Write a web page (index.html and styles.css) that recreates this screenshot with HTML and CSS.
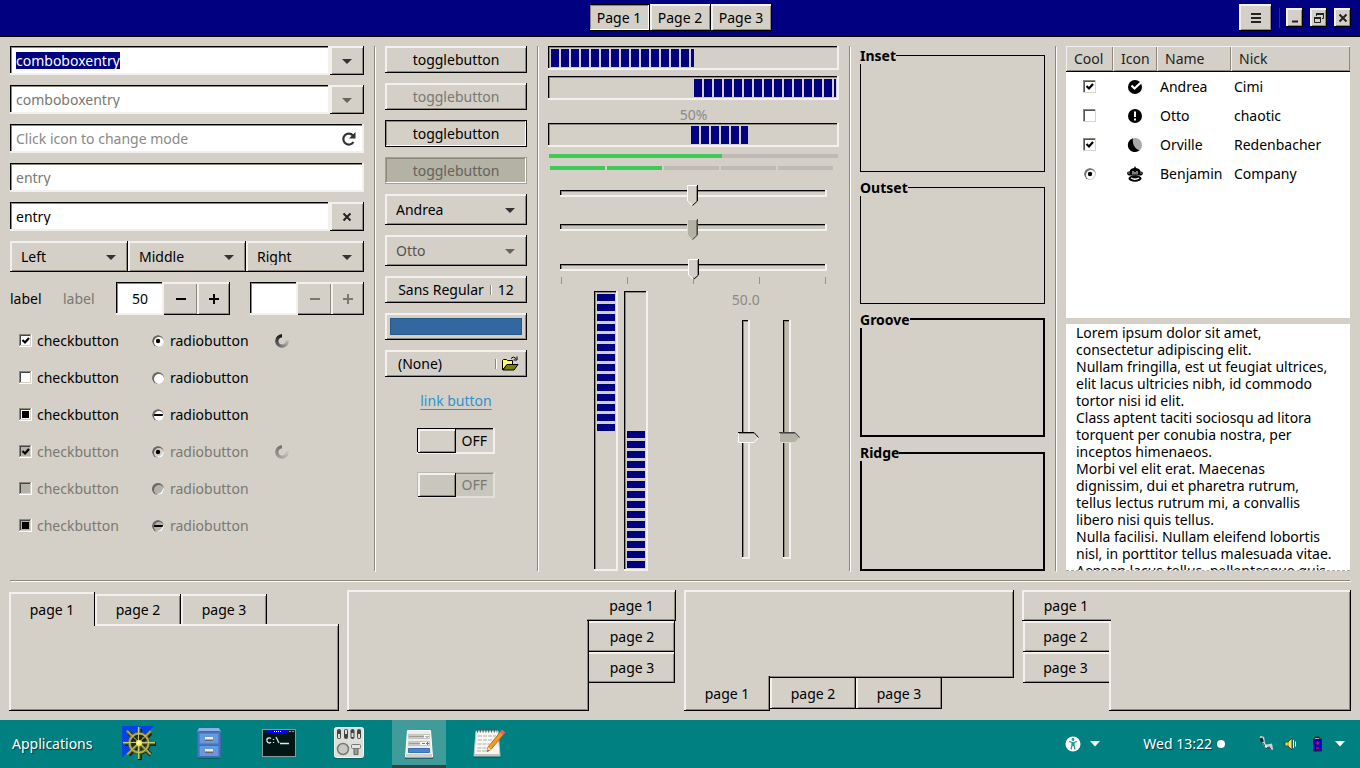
FILE: index.html
```html
<!DOCTYPE html>
<html lang="en">
<head>
<meta charset="utf-8">
<title>Widget Factory</title>
<link rel="stylesheet" href="styles.css">
</head>
<body>
<header class="headerbar">
  <div class="stack-switcher">
    <button class="btn pressed" type="button">Page 1</button>
    <button class="btn" type="button">Page 2</button>
    <button class="btn" type="button">Page 3</button>
  </div>
  <div class="window-controls">
    <button class="btn menu-btn" type="button" aria-label="Menu"><svg width="10" height="10" viewBox="0 0 10 10"><path d="M0 1h10M0 5h10M0 9h10" stroke="#222" stroke-width="2"/></svg></button>
    <span class="title-sep"></span>
    <button class="btn win-btn" type="button" aria-label="Minimize"><svg width="12" height="12" viewBox="0 0 12 12"><path d="M3 9.500h6" stroke="#222" stroke-width="2"/></svg></button>
    <button class="btn win-btn" type="button" aria-label="Restore"><svg width="12" height="12" viewBox="0 0 12 12"><path d="M3.500 4V1.500h7v5H9M1.500 5.500h6v5h-6z" fill="none" stroke="#222"/><path d="M3 2h8M1 6h7" stroke="#222" stroke-width="2"/></svg></button>
    <button class="btn win-btn" type="button" aria-label="Close"><svg width="12" height="12" viewBox="0 0 12 12"><path d="M2.500 2.500l7 7M9.500 2.500l-7 7" stroke="#222" stroke-width="2"/></svg></button>
  </div>
</header>

<main class="content">
  <div class="columns">
    <section class="col inputs">
      <div class="entry-row">
        <input class="entry" id="first-entry" type="text" value="comboboxentry" aria-label="Combo entry">
        <button class="btn side-btn" type="button" aria-label="Open list"><svg class="arrow" viewBox="0 0 10 6"><path d="M0 1h10L5 6z"/></svg></button>
      </div>
      <div class="entry-row">
        <input class="entry" type="text" value="comboboxentry" aria-label="Disabled combo entry" disabled>
        <button class="btn side-btn" type="button" aria-label="Open list" disabled><svg class="arrow" viewBox="0 0 10 6"><path d="M0 1h10L5 6z"/></svg></button>
      </div>
      <div class="entry-row icon-entry">
        <input class="entry" type="text" placeholder="Click icon to change mode" aria-label="Mode">
        <svg class="refresh" width="16" height="16" viewBox="0 0 16 16"><path d="M12.500 11A5.500 5.500 0 1 1 12 4.500" fill="none" stroke="#333" stroke-width="2.200"/><path d="M14.500 1v6.500H8z" fill="#333"/></svg>
      </div>
      <div class="entry-row"><input class="entry" type="text" value="entry" aria-label="Disabled entry" disabled></div>
      <div class="entry-row">
        <input class="entry" type="text" value="entry" aria-label="Entry">
        <button class="btn side-btn" type="button" aria-label="Clear"><svg width="10" height="10" viewBox="0 0 10 10"><path d="M1.500 1.500l7 7M8.500 1.500l-7 7" stroke="#222" stroke-width="2"/></svg></button>
      </div>
      <div class="linked">
        <select class="combo" aria-label="Left"><option>Left</option></select>
        <select class="combo" aria-label="Middle"><option>Middle</option></select>
        <select class="combo" aria-label="Right"><option>Right</option></select>
      </div>
      <div class="spin-row">
        <label for="spin-a">label</label>
        <label class="dim" for="spin-b">label</label>
        <div class="spin">
          <input class="entry" id="spin-a" type="number" value="50">
          <button class="btn flat" type="button" aria-label="Decrease"><svg width="12" height="12" viewBox="0 0 12 12"><path d="M1 6h10" stroke="currentColor" stroke-width="2"/></svg></button>
          <button class="btn" type="button" aria-label="Increase"><svg width="12" height="12" viewBox="0 0 12 12"><path d="M1 6h10M6 1v10" stroke="currentColor" stroke-width="2"/></svg></button>
        </div>
        <div class="spin">
          <input class="entry" id="spin-b" type="number" disabled>
          <button class="btn flat" type="button" aria-label="Decrease" disabled><svg width="12" height="12" viewBox="0 0 12 12"><path d="M1 6h10" stroke="currentColor" stroke-width="2"/></svg></button>
          <button class="btn" type="button" aria-label="Increase" disabled><svg width="12" height="12" viewBox="0 0 12 12"><path d="M1 6h10M6 1v10" stroke="currentColor" stroke-width="2"/></svg></button>
        </div>
      </div>
      <div class="checks">
        <label><input class="check" type="checkbox" checked>checkbutton</label>
        <label><input class="radio" type="radio" name="r1" checked>radiobutton</label>
        <span class="spinner"></span>
        <label><input class="check" type="checkbox">checkbutton</label>
        <label><input class="radio" type="radio" name="r2">radiobutton</label>
        <span></span>
        <label><input class="check mixed" type="checkbox">checkbutton</label>
        <label><input class="radio mixed" type="radio" name="r3">radiobutton</label>
        <span></span>
        <label class="dim"><input class="check" type="checkbox" checked disabled>checkbutton</label>
        <label class="dim"><input class="radio" type="radio" name="r4" checked disabled>radiobutton</label>
        <span class="spinner faint"></span>
        <label class="dim"><input class="check" type="checkbox" disabled>checkbutton</label>
        <label class="dim"><input class="radio" type="radio" name="r5" disabled>radiobutton</label>
        <span></span>
        <label class="dim"><input class="check mixed" type="checkbox" disabled>checkbutton</label>
        <label class="dim"><input class="radio mixed" type="radio" name="r6" disabled>radiobutton</label>
      </div>
    </section>

    <div class="vsep"></div>

    <section class="col buttons">
      <button class="btn" type="button">togglebutton</button>
      <button class="btn" type="button" disabled>togglebutton</button>
      <button class="btn pressed" type="button">togglebutton</button>
      <button class="btn pressed" type="button" disabled>togglebutton</button>
      <select class="combo" aria-label="Person"><option>Andrea</option></select>
      <select class="combo" aria-label="Disabled person" disabled><option>Otto</option></select>
      <button class="btn font-btn" type="button"><span>Sans Regular</span><i class="mini-sep"></i><span>12</span></button>
      <button class="btn color-btn" type="button" aria-label="Pick a color"><span></span></button>
      <button class="btn file-btn" type="button"><span>(None)</span><i class="mini-sep"></i>
        <svg width="17" height="15" viewBox="0 0 17 15"><path d="M.5 14V4.500l1-1h3l1 1h5v4H5L.5 14z" fill="#ffff66" stroke="#000"/><path d="M1 14l4-5.500h11L12 14z" fill="#808000" stroke="#000"/><path d="M9 2.500Q11-.5 14 2.500M15 .5v3.500h-3.500" fill="none" stroke="#000"/></svg></button>
      <a class="link" href="#">link button</a>
      <div class="switch-row"><button class="switch" role="switch" aria-checked="false" type="button"><span class="knob"></span><span class="state">OFF</span></button></div>
      <div class="switch-row"><button class="switch" role="switch" aria-checked="false" type="button" disabled><span class="knob"></span><span class="state">OFF</span></button></div>
    </section>

    <div class="vsep"></div>

    <section class="col meters">
      <div class="bar" role="progressbar" aria-valuenow="50"><div class="fill" style="width:50%"></div></div>
      <div class="bar second" role="progressbar" aria-valuenow="50"><div class="fill" style="width:50%;margin-left:50%"></div></div>
      <div class="value">50%</div>
      <div class="bar" role="progressbar"><div class="fill" style="width:20%;margin-left:49%"></div></div>
      <div class="level"><span style="width:60%"></span></div>
      <div class="level-steps"><span class="on"></span><span class="on"></span><span></span><span></span><span></span></div>
      <input class="scale" type="range" max="200" value="99" aria-label="Scale">
      <input class="scale second" type="range" max="200" value="99" aria-label="Disabled scale" disabled>
      <input class="scale third" type="range" value="50" aria-label="Scale with marks">
      <div class="ticks"><i></i><i></i><i></i><i></i><i></i></div>
      <div class="verticals">
        <div class="half bars">
          <div class="vbar" role="progressbar"><div class="vfill" style="height:50%"></div></div>
          <div class="vbar end" role="progressbar"><div class="vfill" style="height:50%"></div></div>
        </div>
        <div class="half scales">
          <div class="vscale-box"><span class="value">50.0</span><input class="vscale" type="range" value="49" aria-label="Vertical scale"></div>
          <div class="vscale-box"><span class="value"></span><input class="vscale" type="range" value="49" aria-label="Disabled vertical scale" disabled></div>
        </div>
      </div>
    </section>

    <div class="vsep"></div>

    <section class="col frames">
      <fieldset class="frame"><legend>Inset</legend></fieldset>
      <fieldset class="frame"><legend>Outset</legend></fieldset>
      <fieldset class="frame thick"><legend>Groove</legend></fieldset>
      <fieldset class="frame thick"><legend>Ridge</legend></fieldset>
    </section>

    <div class="vsep"></div>

    <section class="views">
      <div class="tree">
        <table>
          <colgroup><col class="c-cool"><col class="c-icon"><col class="c-name"><col></colgroup>
          <thead><tr><th>Cool</th><th>Icon</th><th>Name</th><th>Nick</th></tr></thead>
          <tbody>
            <tr><td><input class="check light" type="checkbox" aria-label="Andrea" checked></td>
              <td><svg width="16" height="16" viewBox="0 0 16 16"><circle cx="8" cy="8" r="7"/><path d="M4.500 6.500L7.500 9.500L15.500 2" fill="none" stroke="#fff" stroke-width="2.200"/></svg></td><td>Andrea</td><td>Cimi</td></tr>
            <tr><td><input class="check light" type="checkbox" aria-label="Otto"></td>
              <td><svg width="16" height="16" viewBox="0 0 16 16"><circle cx="8" cy="8" r="7"/><path d="M8 3.500v5.500M8 10.500v2" stroke="#fff" stroke-width="2"/></svg></td><td>Otto</td><td>chaotic</td></tr>
            <tr><td><input class="check light" type="checkbox" aria-label="Orville" checked></td>
              <td><svg width="16" height="16" viewBox="0 0 16 16"><circle cx="8" cy="8" r="7" fill="#aaa"/><path d="M6 1.300A7 7 0 1 0 12.500 13.300C8 12 5 7 6 1.300z"/></svg></td><td>Orville</td><td>Redenbacher</td></tr>
            <tr><td><input class="radio light" type="radio" name="tree" aria-label="Benjamin" checked></td>
              <td><svg width="16" height="16" viewBox="0 0 16 16"><path d="M8 0l1 2c2.500.3 4 1.500 4.500 3.500 3-.5 3.200 3.500.2 4H2.300c-3-.5-2.800-4.500.2-4C3 3.500 4.500 2.300 7 2z"/><path d="M6 5v3.500M10 5v3.500M8 6v2.500" fill="none" stroke="#fff"/><path d="M1.500 7h1M13.500 7h1" stroke="#fff"/><ellipse cx="8" cy="12.500" rx="6.500" ry="3.300"/><path d="M4 12q4 2.500 8 0" fill="none" stroke="#fff" stroke-width="1.300"/></svg></td><td>Benjamin</td><td>Company</td></tr>
          </tbody>
        </table>
      </div>
      <textarea class="textview" aria-label="Text view" readonly>
Lorem ipsum dolor sit amet,
consectetur adipiscing elit.
Nullam fringilla, est ut feugiat ultrices,
elit lacus ultricies nibh, id commodo
tortor nisi id elit.
Class aptent taciti sociosqu ad litora
torquent per conubia nostra, per
inceptos himenaeos.
Morbi vel elit erat. Maecenas
dignissim, dui et pharetra rutrum,
tellus lectus rutrum mi, a convallis
libero nisi quis tellus.
Nulla facilisi. Nullam eleifend lobortis
nisl, in porttitor tellus malesuada vitae.
Aenean lacus tellus, pellentesque quis</textarea>
    </section>
  </div>

  <div class="hsep"></div>

  <div class="notebooks">
    <div class="notebook top">
      <div class="tabs" role="tablist"><button type="button" role="tab" class="tab active">page 1</button><button type="button" role="tab" class="tab">page 2</button><button type="button" role="tab" class="tab">page 3</button></div>
      <div class="panel"></div>
    </div>
    <div class="notebook right">
      <div class="panel"></div>
      <div class="tabs" role="tablist"><button type="button" role="tab" class="tab active">page 1</button><button type="button" role="tab" class="tab">page 2</button><button type="button" role="tab" class="tab">page 3</button></div>
    </div>
    <div class="notebook bottom">
      <div class="panel"></div>
      <div class="tabs" role="tablist"><button type="button" role="tab" class="tab active">page 1</button><button type="button" role="tab" class="tab">page 2</button><button type="button" role="tab" class="tab">page 3</button></div>
    </div>
    <div class="notebook left">
      <div class="tabs" role="tablist"><button type="button" role="tab" class="tab active">page 1</button><button type="button" role="tab" class="tab">page 2</button><button type="button" role="tab" class="tab">page 3</button></div>
      <div class="panel"></div>
    </div>
  </div>
</main>

<footer class="taskbar">
  <button class="apps" type="button">Applications</button>
  <nav class="launchers">
    <button type="button" aria-label="Navigator"><svg width="36" height="36" viewBox="0 0 36 36">
      <defs><pattern id="dither" width="2" height="2" patternUnits="userSpaceOnUse"><path d="M0 0h1v1H0zM1 1h1v1H1z" fill="#0040e0"/></pattern></defs>
      <path d="M1 1h32L1 33z" fill="#0058a8"/><path d="M1 1h32L1 33z" fill="url(#dither)"/>
      <g fill="none" stroke="#222" stroke-width="4"><circle cx="19" cy="19" r="9" stroke-width="3"/><path d="M19 4v31M4 19h31M8 8l22 22M30 8L8 30"/></g>
      <g fill="none" stroke="#83832c" stroke-width="2.600"><circle cx="18" cy="18" r="9.500"/><path d="M18 2v32M2 18h32M6 6l24 24M30 6L6 30" stroke-dasharray="8 5.500 20 5.500"/></g>
      <g fill="none" stroke="#c8cc60"><circle cx="18" cy="18" r="9.500"/><path d="M17.500 2v32M2 17.500h32M6 5.500l24 24M29.500 6L6 29.500"/></g>
      <circle cx="18" cy="18" r="3" fill="#f4f060"/><circle cx="17.500" cy="17.500" r="1.200" fill="#fff"/></svg></button>
    <button type="button" aria-label="Files"><svg width="36" height="36" viewBox="0 0 36 36">
      <path d="M7 32h22v2H7z" fill="#036565"/><path d="M8 3h20l2 4H6z" fill="#8ab0e6"/><rect x="6.500" y="6.500" width="23" height="26" rx="1" fill="#4a7cc6" stroke="#3b69b0"/>
      <path d="M8 8h20v11H8zM8 20.500h20v11H8z" fill="#6699dd" stroke="#3f6fb8"/><path d="M14 13h8v3h-8zM14 25h8v3h-8z" fill="#666"/><path d="M14 12h8v2.500h-8zM14 24h8v2.500h-8z" fill="#eee"/></svg></button>
    <button type="button" aria-label="Terminal"><svg width="36" height="36" viewBox="0 0 36 36">
      <rect x="1.500" y="4.500" width="33" height="27" fill="#021616" stroke="#8a9a98"/><path d="M2 5h32v3H2z" fill="#0a2020"/><path d="M6 5h20v3H6z" fill="#0000e0"/><path d="M13 6.500h8" stroke="#fff" stroke-dasharray="1 1"/><path d="M28 6.500h5" stroke="#999" stroke-dasharray="2 1"/>
      <path d="M10 13.500q-1-1-2.500-.5-2 .5-1.500 3 .5 2 2.500 2l1.500-.8M12.500 14v1M12.500 17v1M15 12l3 6M19 18.500h9" fill="none" stroke="#dfe8e8" stroke-width="1.300"/></svg></button>
    <button type="button" aria-label="Settings"><svg width="36" height="36" viewBox="0 0 36 36">
      <path d="M4 32h28v2H4z" fill="#036565"/><rect x="3.500" y="2.500" width="29" height="30" rx="2" fill="#dededb" stroke="#f6f6f4"/>
      <g fill="#444"><rect x="6" y="4" width="4" height="10" rx="2"/><rect x="13" y="4" width="4" height="10" rx="2"/><rect x="19.500" y="4" width="4" height="10" rx="2"/><rect x="26" y="4" width="4" height="10" rx="2"/></g>
      <path d="M7 9h2v4H7zM14 5h2v4h-2zM20.500 8h2v4h-2zM27 9h2v4h-2z" fill="#ddd"/>
      <circle cx="12" cy="24" r="5.500" fill="#c8c8c5" stroke="#777" stroke-width="1.500"/><path d="M23 22h4v7.500h-4z" fill="#999" stroke="#666"/><rect x="20.500" y="19.500" width="9" height="4" rx="1" fill="#e4e4e0" stroke="#777"/></svg></button>
    <button class="running" type="button" aria-label="Widget Factory"><svg width="36" height="36" viewBox="0 0 36 36">
      <path d="M4 32h28v2H4z" fill="#236565"/><path d="M6.500 5.500h23l2 26.500h-27z" fill="#ececea" stroke="#fff"/><path d="M5 29h26v3H5z" fill="#d0d0cc"/>
      <path d="M7.500 9.500h21v4h-21zM7.500 16.500h21v4h-21z" fill="#f8f8f6" stroke="#c4c4c0"/><path d="M8 10.500h15v2H8zM8 17.500h11v2H8z" fill="#9c9b96"/><path d="M24.500 11l1.500 1.500 1.500-1.500M21 18.500h3M25 18.500h3M26.500 17v3" fill="none" stroke="#777"/><path d="M7.500 23.500h21v4h-21z" fill="#4a86cf" stroke="#3b6fb4"/></svg></button>
    <button type="button" aria-label="Notes"><svg width="36" height="36" viewBox="0 0 36 36">
      <path d="M3 31h26v2H3z" fill="#036565"/><path d="M5 6h22l2 25H3z" fill="#f6f6f3" stroke="#c4c4c0"/><path d="M3 29h26v2H3z" fill="#c4c4c0"/><path d="M6 5.500h20" stroke="#555" stroke-width="4" stroke-dasharray="1 1.800"/>
      <path d="M7 11h18M7 15h15M6.500 19h12M6.500 23h9M6 26h12" stroke="#b0b0ac" stroke-dasharray="4 1"/><path d="M31 5l3 2.500-14 17-4 2 1-4.500z" fill="#f39a2e" stroke="#c16a10"/><path d="M31 5l3 2.500-2 2.500-3-2.500z" fill="#e8606a"/><path d="M17 22l3 2.500-4 2z" fill="#f0d8b0"/><path d="M16 26.500l1-1.800.8 1z" fill="#222"/></svg></button>
  </nav>
  <div class="tray">
    <button type="button" class="tray-a11y" aria-label="Accessibility"><svg width="16" height="16" viewBox="0 0 16 16"><circle cx="8" cy="8" r="7.500" fill="#fff"/><circle cx="8" cy="3.500" r="1.400" fill="#2b9a94"/><path d="M4 5.500l3 1v3L6 13.500M12 5.500l-3 1v3l1 4M8 6v4" fill="none" stroke="#2b9a94" stroke-width="1.300"/></svg><svg width="10" height="6" viewBox="0 0 10 6"><path d="M0 0h10L5 5.500z" fill="#fff"/></svg></button>
    <button type="button" class="clock"><span>Wed 13:22</span><i></i></button>
    <button type="button" class="indicators" aria-label="System">
      <svg width="16" height="16" viewBox="0 0 16 16"><path d="M3 1l3 1 1 6 2 2 5-1 1 5" fill="none" stroke="#c8d4d4" stroke-width="2.500"/><path d="M4 2l1.500 4" stroke="#222" stroke-width="3"/><path d="M6 7l3 5h4l1.500 2.500" fill="none" stroke="#444"/><path d="M8 10l2 1" stroke="#fff" stroke-width="2"/></svg>
      <svg width="16" height="16" viewBox="0 0 16 16"><path d="M2 6h3l4-4v12L5 10H2z" fill="#f0ec50" stroke="#444"/><path d="M5 6v4" stroke="#888820"/><path d="M10.500 4v8M12.500 5.500v5" stroke="#fff"/></svg>
      <svg width="16" height="16" viewBox="0 0 16 16"><path d="M6 1h4v2h2.500v12h-8V3H6z" fill="#0000c8" stroke="#222"/><path d="M6 2.500h4" stroke="#aaa"/><path d="M8.500 5v4M6.500 7h4M7 12h3" stroke="#e00020" stroke-width="1.500"/></svg>
      <svg width="10" height="6" viewBox="0 0 10 6"><path d="M0 0h10L5 5.500z" fill="#fff"/></svg></button>
  </div>
</footer>
<script src="app.js"></script>
</body>
</html>
```
FILE: styles.css
```css
:root {
  --bg: #d4d0c8;
  --light: #f2f1ef;
  --shade: #8c897b;
  --navy: #000080;
  --dim: #7a7871;
  --raised: inset -1px -1px #000, inset 2px 2px var(--light), inset -2px -2px var(--shade);
  --sunken: inset -2px -2px var(--light), inset 1px 1px #000, inset 2px 2px var(--shade);
}
* { box-sizing: border-box; }
body {
  margin: 0;
  min-height: 100vh;
  display: flex;
  flex-direction: column;
  background: var(--bg);
  color: #000;
  font: 14px/17px "Noto Sans", "Open Sans", sans-serif;
}
button, input, select, textarea { font: inherit; color: inherit; margin: 0; border: 0; border-radius: 0; outline: 0; }
svg { display: block; flex: none; }

.btn { background: var(--bg); box-shadow: var(--raised); display: flex; align-items: center; justify-content: center; padding: 0; }
.btn:disabled { color: var(--dim); }
.btn.pressed { box-shadow: inset 0 0 0 1px #000, inset -2px -2px #fff, inset 2px 2px var(--shade); }
.btn.pressed:disabled { background: #b4b1a5; color: #65635b; box-shadow: inset 0 0 0 1px #a19e94, inset -2px -2px #fff, inset 2px 2px var(--shade); }

/* header bar */
.headerbar {
  display: grid;
  grid-template-columns: 1fr auto 1fr;
  align-items: center;
  height: 37px;
  padding: 0 9px 1px;
  background: var(--navy);
  border-bottom: 1px solid #000;
}
.stack-switcher { grid-column: 2; display: flex; }
.stack-switcher .btn { width: 61px; height: 27px; }
.window-controls { display: flex; align-items: center; justify-content: flex-end; gap: 7px; }
.menu-btn { width: 33px; height: 27px; }
.title-sep { width: 1px; height: 20px; background: #2a2a96; margin-right: -1px; }
.win-btn { width: 17px; height: 19px; }

/* columns */
.content { flex: 1; display: flex; flex-direction: column; padding: 9px; }
.columns {
  flex: 1;
  display: grid;
  grid-template-columns: 354fr 1px 142fr 1px 291fr 1px 185fr 1px 284fr;
  gap: 10px;
  padding: 0 1px;
}
.col, .views { min-width: 0; }
.vsep { background: var(--shade); box-shadow: 1px 1px #fff; }
.hsep { height: 1px; margin: 9px 1px 9px; background: var(--shade); box-shadow: 1px 1px #fff; }

/* inputs */
.inputs { display: flex; flex-direction: column; gap: 10px; }
.entry-row { display: flex; height: 29px; }
.entry { flex: 1; width: 0; min-width: 0; background: #fff; box-shadow: var(--sunken); padding: 0 6px; }
.entry:disabled { color: var(--dim); }
.entry::placeholder { color: #8a8a88; opacity: 1; }
.entry::selection { background: var(--navy); color: #fff; }
.side-btn { width: 34px; }
.arrow { width: 10px; height: 6px; fill: #333; }
:disabled .arrow { fill: #66645c; }
.icon-entry { align-items: center; }
.icon-entry .entry { height: 29px; }
.refresh { margin-left: -23px; margin-right: 7px; }
.linked { display: flex; }
.linked .combo { flex: 1; }
.combo {
  appearance: none;
  min-width: 0;
  height: 31px;
  padding: 0 28px 0 11px;
  background: url("data:image/svg+xml,%3Csvg xmlns='http://www.w3.org/2000/svg' width='10' height='6'%3E%3Cpath d='M0 1h10L5 6z' fill='%23333'/%3E%3C/svg%3E") no-repeat right 12px center var(--bg);
  box-shadow: var(--raised);
}
.combo:disabled { color: #55534d; opacity: 1; background-image: url("data:image/svg+xml,%3Csvg xmlns='http://www.w3.org/2000/svg' width='10' height='6'%3E%3Cpath d='M0 1h10L5 6z' fill='%2366645c'/%3E%3C/svg%3E"); }
.spin-row { display: flex; align-items: center; gap: 20px; }
.spin-row label { width: 33px; white-space: nowrap; }
.dim { color: var(--dim); }
.spin { flex: 1; min-width: 0; display: flex; height: 33px; }
.spin .entry { text-align: center; appearance: textfield; }
.spin .entry::-webkit-inner-spin-button { appearance: none; margin: 0; }
.spin .btn { width: 33px; }
.spin .btn.flat { box-shadow: inset 0 -1px #000, inset 0 2px var(--light), inset -1px -2px var(--shade); }

.checks { display: grid; grid-template-columns: 133px 123px 1fr; row-gap: 10px; padding: 2px 0 0 9px; }
.checks label { display: flex; align-items: center; gap: 5px; height: 27px; }
.check, .radio { appearance: none; flex: none; width: 13px; height: 13px; background: #fff no-repeat center; }
.check { box-shadow: inset -1px -1px #fff, inset 1px 1px var(--shade), inset -2px -2px var(--bg), inset 2px 2px #444; }
.check.light { box-shadow: inset -1px -1px #d8d5ce, inset 1px 1px var(--shade), inset 2px 2px #555; }
.check:disabled { background-color: #b5b2ab; }
.check:checked { background-image: url("data:image/svg+xml,%3Csvg xmlns='http://www.w3.org/2000/svg' width='13' height='13'%3E%3Cpath d='M3.500 6l2.500 2.500 4-4.500' fill='none' stroke='%23000' stroke-width='2.200'/%3E%3C/svg%3E"); }
.check.mixed { background-image: url("data:image/svg+xml,%3Csvg xmlns='http://www.w3.org/2000/svg' width='13' height='13'%3E%3Cpath d='M3 3h7v7H3z'/%3E%3C/svg%3E"); }
.radio { border-radius: 50%; width: 12px; height: 12px; margin-right: 1px; box-shadow: inset 1px 1px 0 1px #6a685f, inset -1px -1px #fff; }
.radio.light { box-shadow: inset 1px 1px 0 1px #77756c, inset -1px -1px #ddd; }
.radio:disabled { background-color: #b5b2ab; }
.radio:checked { background-image: url("data:image/svg+xml,%3Csvg xmlns='http://www.w3.org/2000/svg' width='12' height='12'%3E%3Ccircle cx='6' cy='6' r='2.200'/%3E%3C/svg%3E"); }
.radio.mixed { background-image: url("data:image/svg+xml,%3Csvg xmlns='http://www.w3.org/2000/svg' width='12' height='12'%3E%3Cpath d='M1 5h10v2H1z'/%3E%3C/svg%3E"); }
.radio:checked:disabled { background-color: var(--bg); }
.spinner {
  align-self: center;
  width: 14px;
  height: 14px;
  border-radius: 50%;
  background: conic-gradient(#bbb7ae00 0 20%, #aaa 30%, #111 100%);
  mask: radial-gradient(circle, transparent 3px, #000 4px);
}
.spinner.faint { opacity: .5; }

/* buttons */
.buttons { display: flex; flex-direction: column; gap: 10px; }
.buttons > .btn { height: 27px; }
.mini-sep { width: 2px; height: 10px; background: var(--shade); border-right: 1px solid #fff; }
.font-btn { gap: 6px; }
.file-btn.btn { justify-content: flex-start; padding: 0 8px 0 13px; gap: 5px; }
.file-btn span { flex: 1; text-align: left; }
.color-btn.btn { padding: 5px; }
.color-btn span { flex: 1; height: 17px; background: #3267a1; border: 1px solid #285886; }
.link { height: 27px; line-height: 27px; text-align: center; color: #2e93ce; text-underline-offset: 3px; }
.switch-row { height: 34px; display: flex; align-items: center; justify-content: center; }
.switch { display: flex; width: 78px; height: 26px; padding: 1px 2px 1px 1px; background: var(--bg); box-shadow: var(--sunken); align-items: stretch; }
.knob { flex: 1; background: var(--bg); box-shadow: var(--raised); }
.state { flex: 1; line-height: 24px; }
.switch:disabled { color: var(--dim); background: #c9c6bd; box-shadow: inset -1px -1px #e2e0da, inset 1px 1px #bbb8ae, inset -2px -2px #e2e0da, inset 2px 2px var(--shade); }
.switch:disabled .knob { background: #c9c6bd; }

/* progress bars, levels and scales */
.meters { display: flex; flex-direction: column; }
.bar { height: 24px; padding: 3px; box-shadow: var(--sunken); }
.bar.second { margin: 6px 0; }
.fill { height: 18px; background: repeating-linear-gradient(90deg, var(--navy) 0 8px, transparent 8px 10px); }
.value { height: 17px; color: #8c8a84; text-align: center; }
.level { height: 4px; margin: 7px 1px 8px; background: #bebbb4; display: flex; }
.level span { background: #3fca55; }
.level-steps { display: flex; gap: 2px; height: 4px; margin: 0 6px 15px 2px; }
.level-steps span { flex: 1; background: #bebbb4; }
.level-steps .on { background: #3fca55; }
.scale { appearance: none; height: 17px; margin: 0 12px; background: none; }
.scale.second { margin-top: 17px; margin-bottom: 23px; }
.scale::-webkit-slider-runnable-track { height: 7px; box-shadow: var(--sunken); }
.scale:disabled::-webkit-slider-runnable-track { background: #c6c5b8; }
.scale::-webkit-slider-thumb {
  appearance: none;
  width: 11px;
  height: 21px;
  margin-top: -5px;
  background: url("data:image/svg+xml,%3Csvg xmlns='http://www.w3.org/2000/svg' width='11' height='21'%3E%3Cpath d='M0 0h11v16l-5 5h-1l-5-5z' fill='%23d4d0c8'/%3E%3Cpath d='M11 .5H.5V16l5 4.500' fill='none' stroke='%23fff'/%3E%3Cpath d='M9.500 1v15' stroke='%238c897b'/%3E%3Cpath d='M10.500 0v16l-5 4.500' fill='none' stroke='%23000'/%3E%3C/svg%3E");
}
.scale:disabled::-webkit-slider-thumb { background-image: url("data:image/svg+xml,%3Csvg xmlns='http://www.w3.org/2000/svg' width='11' height='21'%3E%3Cpath d='M0 0h11v16l-5 5h-1l-5-5z' fill='%23b4b1a5'/%3E%3Cpath d='M11 .5H.5V16l5 4.500' fill='none' stroke='%23d8d6c8'/%3E%3Cpath d='M9.500 1v15' stroke='%23777568'/%3E%3Cpath d='M10.500 0v16l-5 4.500' fill='none' stroke='%23444'/%3E%3C/svg%3E"); }
.ticks { display: flex; justify-content: space-between; height: 7px; margin: 1px 13px 7px; }
.ticks i { width: 1px; background: #96938a; }
.verticals { flex: 1; display: flex; }
.half { flex: 1; display: flex; justify-content: center; }
.bars { gap: 6px; }
.vbar { width: 24px; padding: 3px; box-shadow: var(--sunken); display: flex; flex-direction: column; }
.vbar.end { justify-content: flex-end; }
.vfill { background: repeating-linear-gradient(180deg, var(--navy) 0 7px, transparent 7px 10px); }
.scales { gap: 13px; }
.vscale-box { width: 28px; display: flex; flex-direction: column; align-items: center; }
.vscale { appearance: none; writing-mode: vertical-lr; flex: 1; width: 16px; min-height: 0; margin: 12px 0; background: none; }
.vscale::-webkit-slider-runnable-track { width: 8px; box-shadow: var(--sunken); }
.vscale:disabled::-webkit-slider-runnable-track { background: #bdbab0; }
.vscale::-webkit-slider-thumb {
  appearance: none;
  width: 21px;
  height: 11px;
  margin-left: -4px;
  background: url("data:image/svg+xml,%3Csvg xmlns='http://www.w3.org/2000/svg' width='21' height='11'%3E%3Cpath d='M0 0h16l5 5v1l-5 5H0z' fill='%23d4d0c8'/%3E%3Cpath d='M.5 1v9.500H16l4.500-5' fill='none' stroke='%23fff'/%3E%3Cpath d='M1 1.500h15' stroke='%238c897b'/%3E%3Cpath d='M0 .5h16l4.500 5' fill='none' stroke='%23000'/%3E%3C/svg%3E");
}
.vscale:disabled::-webkit-slider-thumb { background-image: url("data:image/svg+xml,%3Csvg xmlns='http://www.w3.org/2000/svg' width='21' height='11'%3E%3Cpath d='M0 0h16l5 5v1l-5 5H0z' fill='%23b4b1a5'/%3E%3Cpath d='M.5 1v9.500H16l4.500-5' fill='none' stroke='%23d8d6c8'/%3E%3Cpath d='M1 1.500h15' stroke='%23777568'/%3E%3Cpath d='M0 .5h16l4.500 5' fill='none' stroke='%23444'/%3E%3C/svg%3E"); }

/* frames */
.frames { display: flex; flex-direction: column; gap: 7px; padding-top: 1px; }
.frame { flex: 1; min-width: 0; margin: 0; padding: 0; border: 1px solid #000; }
.frame.thick { border-width: 2px; }
.frame legend { margin-left: -1px; padding: 0; background: var(--bg); font-weight: 700; }
.frame.thick legend { margin-left: -2px; }

/* tree and text */
.views { display: grid; grid-template-rows: 272fr 247fr; gap: 6px; }
.tree { background: #fff; }
table { width: 100%; table-layout: fixed; border-collapse: separate; border-spacing: 0; }
.c-cool { width: 47px; }
.c-icon { width: 44px; }
.c-name { width: 74px; }
th { height: 26px; padding: 0 0 0 8px; text-align: left; font-weight: 400; color: #222; background: var(--bg); border-bottom: 1px solid #000; box-shadow: inset 1px 1px var(--light), inset -1px -1px var(--shade); }
td { height: 29px; padding: 0 0 0 3px; }
td:nth-child(-n+2) { padding: 0; }
td:nth-child(-n+2) > * { display: block; margin: 0 auto; }
.textview { display: block; width: 100%; height: 100%; padding: 0 0 0 10px; background: #fff; border-bottom: 1px dashed #aaa; resize: none; overflow: hidden; white-space: pre; }

/* notebooks */
.notebooks { display: grid; grid-template-columns: repeat(4, 1fr); gap: 8px; }
.notebook { display: flex; min-width: 0; height: 121px; }
.panel { flex: 1; box-shadow: var(--raised); }
.tabs { display: flex; }
.tab { padding: 0; background: var(--bg); }
.tab.active { position: relative; z-index: 1; }
.top, .bottom { flex-direction: column; }
.top .tabs { height: 34px; padding-top: 2px; align-items: flex-end; }
.top .tab { width: 86px; height: 30px; box-shadow: inset -1px 0 #000, inset 2px 2px var(--light), inset -2px 0 var(--shade); }
.top .tab.active { height: 34px; margin-bottom: -2px; box-shadow: inset -1px 0 #000, inset 2px 2px var(--light); }
.bottom .tabs { align-items: flex-start; height: 33px; }
.bottom .tab { width: 86px; height: 31px; box-shadow: inset -1px -1px #000, inset 2px 0 var(--light), inset -2px -2px var(--shade); }
.bottom .tab.active { height: 35px; margin-top: -2px; }
.left .tabs, .right .tabs { flex-direction: column; width: 87px; }
.left .tab, .right .tab { height: 31px; width: 86px; }
.right .tab { box-shadow: inset -1px -1px #000, inset 0 2px var(--light), inset -2px -2px var(--shade); }
.right .tab.active { width: 89px; margin-left: -2px; }
.left .tabs { align-items: flex-end; }
.left .tab { box-shadow: inset 0 -1px #000, inset 2px 2px var(--light), inset 0 -2px var(--shade); }
.left .tab.active { width: 89px; margin-right: -2px; }

/* task bar */
.taskbar { display: flex; align-items: center; height: 48px; padding: 0 15px 0 12px; background: #008080; color: #fff; }
.taskbar button { background: none; padding: 0; display: flex; align-items: center; }
.apps, .clock { text-shadow: 1px 1px 1px #003838; }
.taskbar .apps { width: 84px; white-space: nowrap; padding-bottom: 2px; }
.launchers { display: flex; gap: 16px; margin-left: 16px; }
.launchers button { width: 54px; height: 48px; padding-bottom: 2px; justify-content: center; }
.launchers .running { background: #3f9c9a; box-shadow: inset 0 -3px #2b4646; }
.tray { display: flex; margin-left: auto; }
.taskbar .clock { margin: 0 32px 0 43px; padding-bottom: 2px; gap: 5px; }
.clock i { width: 8px; height: 8px; margin-top: 2px; border-radius: 50%; background: #fff; }
.taskbar .indicators { gap: 10px; }
.taskbar .tray-a11y { gap: 9px; }
```
FILE: app.js
```js
document.getElementById('first-entry').select();
```
